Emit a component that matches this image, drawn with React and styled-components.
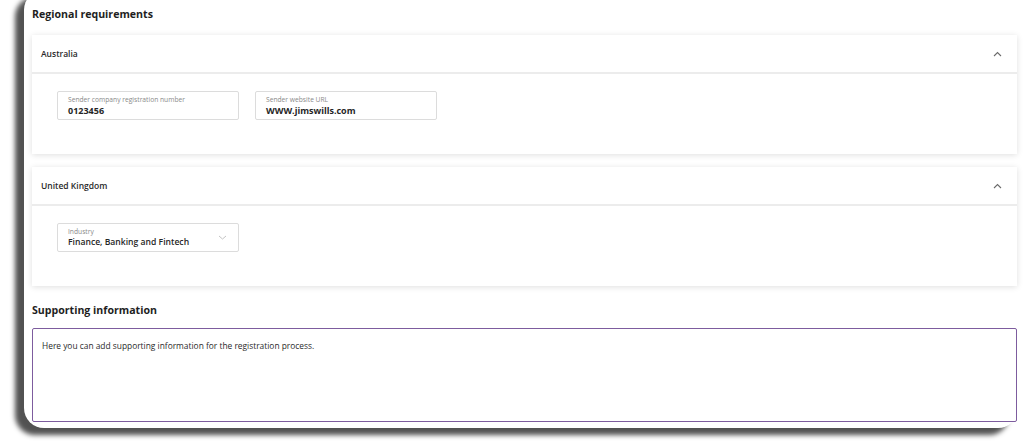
import React from 'react';
import styled, { createGlobalStyle } from 'styled-components';

const GlobalStyle = createGlobalStyle`
    html, body {
        margin: 0;
        padding: 0;
        background: #fff;
        overflow: hidden;
    }
    body {
        font-family: "Open Sans", "Noto Sans", sans-serif;
        color: #222;
    }
`

const Page = styled.div`
    width: 1024px;
    height: 441px;
    overflow: hidden;
`

const Frame = styled.div`
    box-sizing: border-box;
    margin: -10px 0 0 24px;
    width: 994px;
    height: 438px;
    padding: 15px 1px 6px 8px;
    background: #fff;
    border-radius: 20px;
    box-shadow: -9px 7px 5px rgba(0, 0, 0, 0.68);
`

const Heading = styled.h2`
    margin: ${props => props.top || 0}px 0 ${props => props.bottom || 0}px;
    font-size: 10.6px;
    line-height: 18px;
    font-weight: 700;
    color: #1e1e1e;
`

const Card = styled.section`
    background: #fff;
    box-shadow: 0 1px 6px rgba(0, 0, 0, 0.13);
    margin-bottom: 13px;
`

const CardHeader = styled.div`
    height: 37px;
    display: flex;
    align-items: center;
    justify-content: space-between;
    padding: 0 15px 0 9px;
    border-bottom: 2px solid #ececec;
    font-size: 8.5px;
    font-weight: 600;
    color: #2a2a2a;
`

const CardBody = styled.div`
    display: flex;
    gap: 16px;
    padding: 17px 25px 34px;
`

const Field = styled.div`
    box-sizing: border-box;
    position: relative;
    width: 182px;
    height: 29px;
    border: 1px solid #dcdcdc;
    border-radius: 2px;
    padding: 3px 10px 0;
    display: flex;
    flex-direction: column;
`

const Label = styled.span`
    font-size: 6.7px;
    line-height: 9px;
    color: #8a8a8a;
`

const Value = styled.span`
    font-size: ${props => props.size || 9}px;
    line-height: 13px;
    font-weight: ${props => props.weight || 700};
    color: #262626;
`

const Caret = styled.svg`
    position: absolute;
    right: 11px;
    top: 11px;
`

const TextArea = styled.div`
    box-sizing: border-box;
    height: 94px;
    border: 1.5px solid #7d5c9e;
    border-radius: 2px;
    padding: 11px 9px;
    font-size: 8.4px;
    line-height: 12px;
    color: #2a2a2a;
`

const ChevronUp = () => (
    <svg width="9" height="6" viewBox="0 0 9 6">
        <path d="M1 5 L4.5 1.5 L8 5" fill="none" stroke="#6b6b6b" strokeWidth="1.1" />
    </svg>
)

const Region = props => (
    <Card>
        <CardHeader>
            <span>{props.title}</span>
            <ChevronUp />
        </CardHeader>
        <CardBody>{props.children}</CardBody>
    </Card>
)

const App = () => (
    <Page>
        <GlobalStyle />
        <Frame>
            <Heading bottom={12}>Regional requirements</Heading>
            <Region title="Australia">
                <Field>
                    <Label>Sender company registration number</Label>
                    <Value>0123456</Value>
                </Field>
                <Field>
                    <Label>Sender website URL</Label>
                    <Value>WWW.jimswills.com</Value>
                </Field>
            </Region>
            <Region title="United Kingdom">
                <Field>
                    <Label>Industry</Label>
                    <Value weight={600} size={8.6}>Finance, Banking and Fintech</Value>
                    <Caret width="9" height="5" viewBox="0 0 9 5">
                        <path d="M1 1 L4.5 4 L8 1" fill="none" stroke="#c4c4c4" strokeWidth="1" />
                    </Caret>
                </Field>
            </Region>
            <Heading top={15} bottom={9}>Supporting information</Heading>
            <TextArea>Here you can add supporting information for the registration process.</TextArea>
        </Frame>
    </Page>
)

export default App;
